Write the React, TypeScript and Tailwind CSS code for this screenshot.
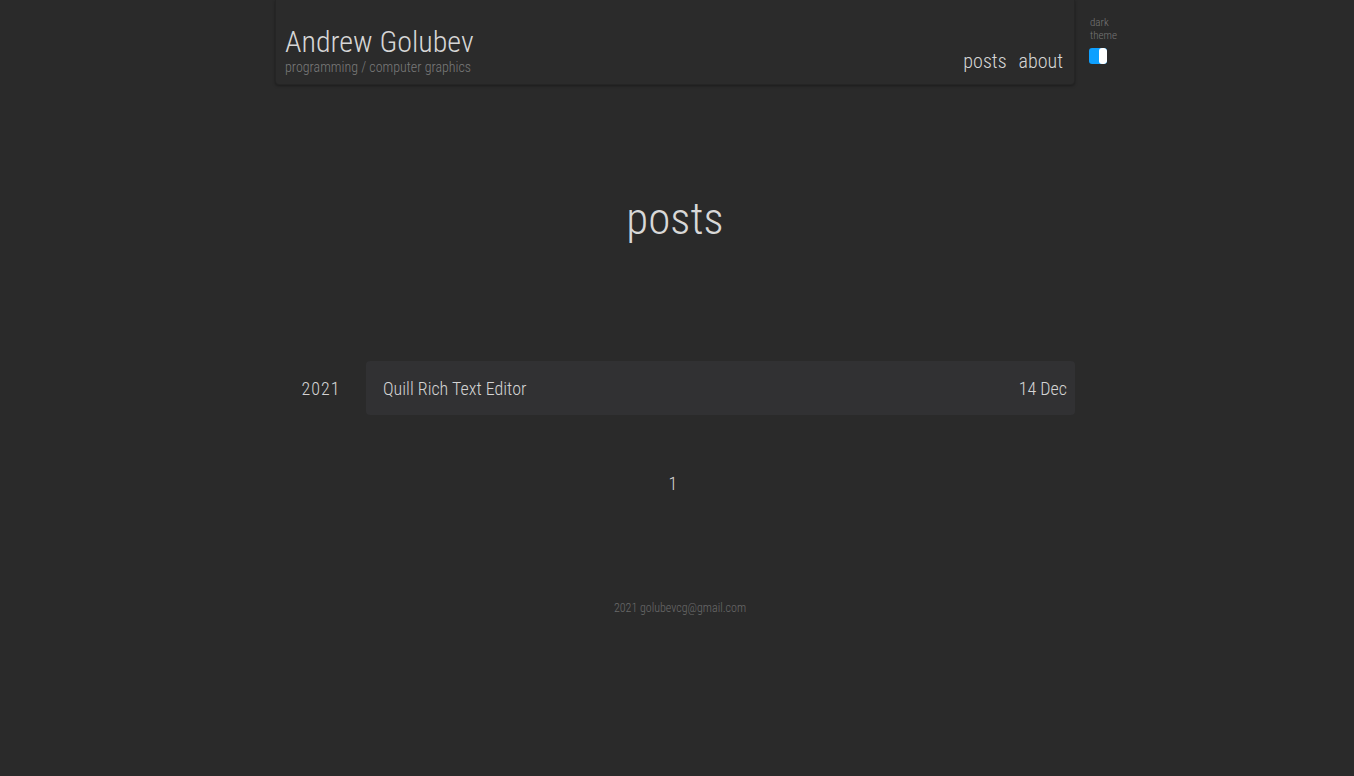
import React from "react";

export default function App() {
  return (
    <div
      className="min-h-[776px] w-full bg-[#2a2a2a] pr-[4px] text-[#d4d4d4]"
      style={{ fontFamily: "'Roboto Condensed', Roboto, 'Liberation Sans', sans-serif" }}
    >
      <div className="relative mx-auto w-[800px]">
        <header className="flex h-[85px] items-end justify-between rounded-b-[4px] border border-t-0 border-[#252525] bg-[#2b2b2b] pl-[9px] pr-[11px] pb-[8px] shadow-[0_1px_3px_rgba(0,0,0,0.35)]">
          <div className="flex flex-col">
            <span className="text-[30px] font-light leading-[32px] text-[#d6d6d6]">Andrew Golubev</span>
            <span className="text-[14px] font-light leading-[18px] text-[#7a7a7a]">programming / computer graphics</span>
          </div>
          <nav className="flex gap-[12px] text-[20px] font-light text-[#d6d6d6]">
            <span>posts</span>
            <span>about</span>
          </nav>
        </header>
        <div className="absolute left-[814px] top-[16px] flex flex-col">
          <span className="pl-[1px] text-[11px] font-light leading-[13px] text-[#777]">dark</span>
          <span className="pl-[1px] text-[11px] font-light leading-[13px] text-[#777]">theme</span>
          <div className="mt-[6px] flex h-[16px] w-[18px] overflow-hidden rounded-[3px] bg-[#0ea0ff]">
            <div className="w-[10px]" />
            <div className="w-[8px] rounded-[3px] bg-white" />
          </div>
        </div>

        <h1 className="mt-[109px] text-center text-[45px] font-light leading-[50px] text-[#d8d8d8]">posts</h1>

        <div className="mt-[117px] flex items-center">
          <div className="w-[91px] pl-[1px] text-center text-[18px] font-light tracking-[1px] text-[#d4d4d4]">2021</div>
          <div className="flex h-[54px] flex-1 items-center justify-between rounded-[4px] bg-[#313133] pl-[17px] pr-[8px] text-[18px] font-light text-[#d4d4d4]">
            <span>Quill Rich Text Editor</span>
            <span>14 Dec</span>
          </div>
        </div>

        <div className="mt-[55px] text-center text-[18px] font-light text-[#d4d4d4]">
          <span className="mr-[4px]">1</span>
        </div>

        <footer className="mt-[102px] pl-[10px] text-center text-[12px] font-light text-[#6a6a6a]">
          2021 golubevcg@gmail.com
        </footer>
      </div>
    </div>
  );
}
